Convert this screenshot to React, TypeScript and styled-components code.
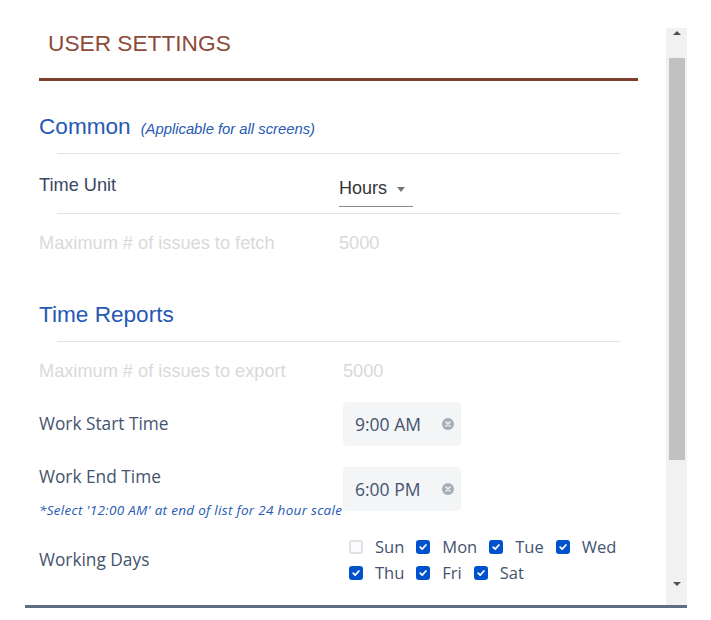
import React from "react";
import styled, { createGlobalStyle } from "styled-components";

const Global = createGlobalStyle`
  html, body { margin: 0; padding: 0; background: #ffffff; }
  body { font-family: "Liberation Sans", Arial, sans-serif; }
  * { box-sizing: border-box; }
`;

const Panel = styled.div`
  margin: 28px 0 0 25px;
  width: 662px;
  height: 580px;
  display: flex;
  border-bottom: 3px solid #5f6c86;
`;

const Content = styled.div`
  flex: 1;
  overflow: hidden;
  padding: 0 28px 0 14px;
`;

const Title = styled.h1`
  margin: 0 0 19px;
  padding-left: 9px;
  font: 400 22.7px/31px "Liberation Sans", Arial, sans-serif;
  color: #8c4b3b;
`;

const Rule = styled.div`
  height: 3px;
  background: #7b3f2d;
`;

const Section = styled.section<{ $top: number }>`
  margin-top: ${(p) => p.$top}px;
`;

const Heading = styled.div`
  display: flex;
  align-items: baseline;
  gap: 10px;
  height: 30px;
  line-height: 30px;
`;

const HeadingText = styled.h2`
  margin: 0;
  font: 400 22.6px/30px "Liberation Sans", Arial, sans-serif;
  color: #2659b4;
`;

const HeadingNote = styled.span`
  font: italic 400 14.8px/30px "Liberation Sans", Arial, sans-serif;
  color: #2659b4;
`;

const Divider = styled.div<{ $flush?: boolean }>`
  margin: ${(p) => (p.$flush ? 0 : 11)}px 18px 0;
  height: 1px;
  background: #e3e3e3;
`;

const Row = styled.div<{ $label: number; $height?: number; $top?: number; $align?: string }>`
  display: grid;
  grid-template-columns: ${(p) => p.$label}px 1fr;
  align-items: ${(p) => p.$align || "start"};
  ${(p) => (p.$height ? `height: ${p.$height}px;` : "")}
  margin-top: ${(p) => p.$top || 0}px;
`;

const PlainLabel = styled.div<{ $pad?: number; $disabled?: boolean }>`
  padding-top: ${(p) => p.$pad || 0}px;
  font: 400 18.2px/24px "Liberation Sans", Arial, sans-serif;
  color: ${(p) => (p.$disabled ? "#d9d9d9" : "#3a4765")};
  white-space: nowrap;
`;

const Select = styled.div`
  margin-top: 22px;
  width: 74px;
  display: flex;
  align-items: center;
  gap: 10px;
  padding-bottom: 6px;
  border-bottom: 1px solid #8a8a8a;
  font: 400 18px/24px "Liberation Sans", Arial, sans-serif;
  color: #333333;
`;

const Caret = styled.span`
  width: 0;
  height: 0;
  border-left: 4.5px solid transparent;
  border-right: 4.5px solid transparent;
  border-top: 5px solid #777777;
  margin-top: 2px;
`;

const FieldLabel = styled.div`
  display: flex;
  flex-direction: column;
`;

const LabelText = styled.div`
  font: 400 17.3px/24px "Open Sans", "Noto Sans", sans-serif;
  color: #44536e;
  white-space: nowrap;
`;

const Hint = styled.div`
  margin-top: 12px;
  font: italic 400 13.5px/18px "Open Sans", "Noto Sans", sans-serif;
  letter-spacing: 0.3px;
  color: #2659b4;
  white-space: nowrap;
`;

const TimeBox = styled.div<{ $top?: number }>`
  margin-top: ${(p) => p.$top || 0}px;
  width: 118px;
  height: 44px;
  display: flex;
  align-items: center;
  justify-content: space-between;
  padding: 0 7px 0 12px;
  background: #f4f5f7;
  border-radius: 4px;
  font: 400 17.5px/24px "Open Sans", "Noto Sans", sans-serif;
  color: #44536e;
`;

const ClearIcon = () => (
  <svg width="12" height="12" viewBox="0 0 12 12">
    <circle cx="6" cy="6" r="6" fill="#a5adba" />
    <path d="M4 4 L8 8 M8 4 L4 8" stroke="#f4f5f7" strokeWidth="1.6" strokeLinecap="round" />
  </svg>
);

const Days = styled.div`
  display: flex;
  flex-wrap: wrap;
  width: 290px;
`;

const Day = styled.label`
  display: flex;
  align-items: center;
  height: 26px;
  padding: 0 6px;
  gap: 12px;
  font: 400 16.5px/24px "Open Sans", "Noto Sans", sans-serif;
  color: #44536e;
`;

const Box = styled.span<{ $on: boolean }>`
  width: 14px;
  height: 14px;
  border-radius: 3px;
  display: flex;
  align-items: center;
  justify-content: center;
  background: ${(p) => (p.$on ? "#0052cc" : "#fafbfc")};
  border: 2px solid ${(p) => (p.$on ? "#0052cc" : "#dfe1e6")};
`;

const Check = () => (
  <svg width="10" height="10" viewBox="0 0 10 10">
    <path d="M2.2 5.2 L4.2 7.1 L7.9 3" fill="none" stroke="#ffffff" strokeWidth="1.8" strokeLinecap="round" strokeLinejoin="round" />
  </svg>
);

const Scrollbar = styled.div`
  width: 21px;
  background: #f1f1f1;
  display: flex;
  flex-direction: column;
  align-items: center;
`;

const Arrow = styled.div<{ $down?: boolean }>`
  height: 14px;
  display: flex;
  align-items: ${(p) => (p.$down ? "flex-start" : "flex-end")};
  margin-top: ${(p) => (p.$down ? "auto" : "0")};
  margin-bottom: ${(p) => (p.$down ? "9px" : "0")};
  &::after {
    content: "";
    width: 0;
    height: 0;
    border-left: 4px solid transparent;
    border-right: 4px solid transparent;
    ${(p) => (p.$down ? "border-top: 4px solid #505050;" : "border-bottom: 4px solid #505050;")}
    margin-bottom: ${(p) => (p.$down ? "0" : "7px")};
  }
`;

const Thumb = styled.div`
  margin-top: 16px;
  width: 16px;
  height: 402px;
  background: #c1c1c1;
`;

const days: [string, boolean][] = [
  ["Sun", false],
  ["Mon", true],
  ["Tue", true],
  ["Wed", true],
  ["Thu", true],
  ["Fri", true],
  ["Sat", true],
];

export default function App() {
  return (
    <>
      <Global />
      <Panel>
        <Content>
          <Title>USER SETTINGS</Title>
          <Rule />
          <Section $top={31}>
            <Heading>
              <HeadingText>Common</HeadingText>
              <HeadingNote>(Applicable for all screens)</HeadingNote>
            </Heading>
            <Divider />
            <Row $label={300} $height={59}>
              <PlainLabel $pad={19}>Time Unit</PlainLabel>
              <Select>
                Hours
                <Caret />
              </Select>
            </Row>
            <Divider $flush />
            <Row $label={300} $height={41}>
              <PlainLabel $pad={17} $disabled>Maximum # of issues to fetch</PlainLabel>
              <PlainLabel $pad={17} $disabled>5000</PlainLabel>
            </Row>
          </Section>
          <Section $top={45}>
            <Heading>
              <HeadingText>Time Reports</HeadingText>
            </Heading>
            <Divider />
            <Row $label={304} $height={41}>
              <PlainLabel $pad={17} $disabled>Maximum # of issues to export</PlainLabel>
              <PlainLabel $pad={17} $disabled>5000</PlainLabel>
            </Row>
            <Row $label={304} $top={19} $align="center">
              <LabelText>Work Start Time</LabelText>
              <TimeBox>
                9:00 AM
                <ClearIcon />
              </TimeBox>
            </Row>
            <Row $label={304} $top={19}>
              <FieldLabel>
                <LabelText>Work End Time</LabelText>
                <Hint>*Select '12:00 AM' at end of list for 24 hour scale</Hint>
              </FieldLabel>
              <TimeBox $top={2}>
                6:00 PM
                <ClearIcon />
              </TimeBox>
            </Row>
            <Row $label={304} $top={15} $align="center">
              <LabelText>Working Days</LabelText>
              <Days>
                {days.map(([d, on]) => (
                  <Day key={d}>
                    <Box $on={on}>{on && <Check />}</Box>
                    {d}
                  </Day>
                ))}
              </Days>
            </Row>
          </Section>
        </Content>
        <Scrollbar>
          <Arrow />
          <Thumb />
          <Arrow $down />
        </Scrollbar>
      </Panel>
    </>
  );
}
